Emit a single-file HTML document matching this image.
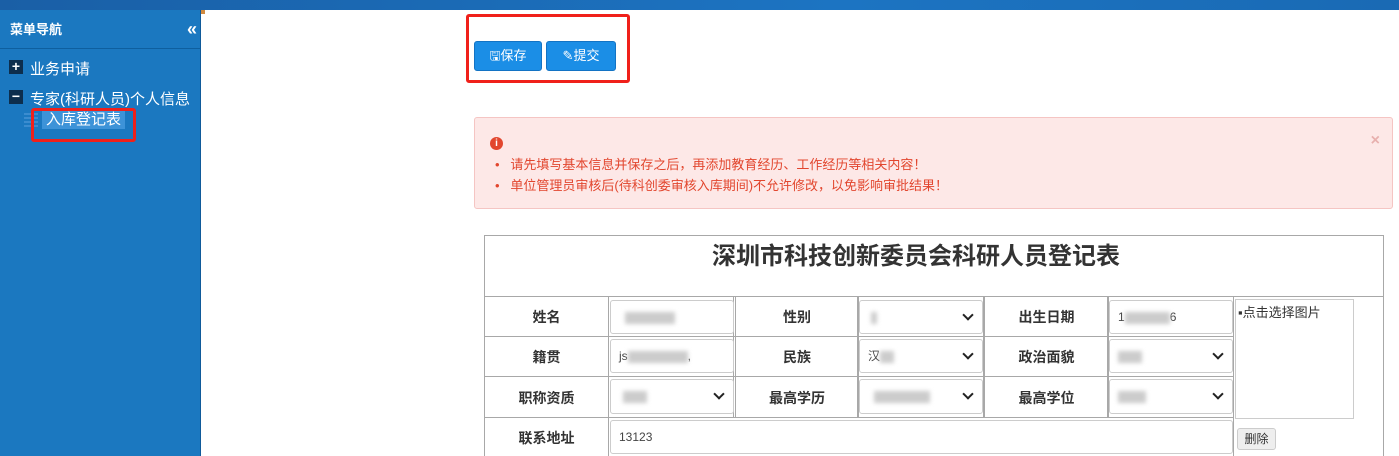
<!DOCTYPE html>
<html><head><meta charset="utf-8"><style>
*{box-sizing:border-box;margin:0;padding:0}
html,body{width:1399px;height:456px;overflow:hidden}
body{position:relative;background:#fff;font-family:"Liberation Sans","Noto Sans CJK SC",sans-serif;font-size:14px;color:#333}
.a{position:absolute}
.top{left:0;top:0;width:1399px;height:10px;background:linear-gradient(90deg,#1a5fa6,#1c74c2 60%,#1a6ab4)}
.side{left:0;top:10px;width:201px;height:446px;background:#1b78c0;border-right:1px solid #0f5a9a}
.hd{left:0;top:10px;width:200px;height:39px;border-bottom:1px solid #0e5f9f;color:#fff;font-size:13px;font-weight:bold;line-height:40px;padding-left:10px}
.nv{color:#fff;font-size:15px}
.box{width:14px;height:14px;background:#0d2e4d;color:#fff;font-size:14px;line-height:13px;text-align:center;font-weight:bold}
.red{border:3px solid #f0201a;border-radius:3px}
.btn{background:#1b8ee6;border:1px solid #1373c4;border-radius:3px;color:#fff;font-size:13px;line-height:28px;text-align:center;height:30px}
.alert{left:474px;top:117px;width:919px;height:92px;background:#fde8e7;border:1px solid #f5c5c3;border-radius:3px;color:#e2462e;font-size:13px}
.cell{border:1px solid #a8a8a8;text-align:center;font-weight:bold;font-size:14px;color:#333}
.in{border:1px solid #ccc;border-radius:3px;background:#fff;font-size:12px;color:#444;padding-left:8px;line-height:32px}
.blur{display:inline-block;background:#ccc;filter:blur(2px);height:12px;vertical-align:middle}
.chev{position:absolute;right:10px;top:10px;width:8px;height:8px;border-right:2px solid #222;border-bottom:2px solid #222;transform:rotate(45deg)}
</style></head><body>
<div class="a top"></div>
<div class="a side"></div>
<div class="a hd">菜单导航<span style="position:absolute;right:3px;top:-1px;font-size:18px">«</span></div>
<div class="a box" style="left:9px;top:60px">+</div><div class="a nv" style="left:30px;top:58px">业务申请</div>
<div class="a box" style="left:9px;top:90px">−</div><div class="a nv" style="left:30px;top:88px">专家(科研人员)个人信息</div>
<div class="a" style="left:24px;top:113px;width:14px;height:14px;background:repeating-linear-gradient(#3b8ccf 0 2px,#1b78c0 2px 4px)"></div>
<div class="a nv" style="left:42px;top:111px;background:#3d93d8;padding:0 4px;line-height:18px">入库登记表</div>
<div class="a red" style="left:31px;top:108px;width:105px;height:34px"></div>
<div class="a" style="left:201px;top:10px;width:4px;height:4px;background:#d08a40"></div>
<div class="a red" style="left:466px;top:14px;width:164px;height:69px"></div>
<div class="a btn" style="left:474px;top:41px;width:68px">🖫保存</div>
<div class="a btn" style="left:546px;top:41px;width:70px">✎提交</div>
<div class="a alert">
<div class="a" style="left:15px;top:19px;width:13px;height:13px;border-radius:50%;background:#e2462e;color:#fff;font-size:10px;font-weight:bold;text-align:center;line-height:13px">i</div>
<div class="a" style="left:20px;top:36px;line-height:21px">•&nbsp;&nbsp;&nbsp;请先填写基本信息并保存之后，再添加教育经历、工作经历等相关内容！<br>•&nbsp;&nbsp;&nbsp;单位管理员审核后(待科创委审核入库期间)不允许修改，以免影响审批结果！</div>
<div class="a" style="right:12px;top:14px;color:#e8b0ae;font-size:16px;font-weight:bold">×</div>
</div>
<div class="a" style="left:484px;top:235px;width:900px;height:221px;border:1px solid #a8a8a8;border-bottom:none"></div>
<div class="a" style="left:466px;top:236px;width:900px;text-align:center;font-size:24px;font-weight:bold;color:#333">深圳市科技创新委员会科研人员登记表</div>
<div class="a" style="left:484px;top:296px;width:900px;border-top:1px solid #a8a8a8"></div>
<div class="a cell" style="left:484px;top:296px;width:125px;height:41px;line-height:41px">姓名</div>
<div class="a cell" style="left:735px;top:296px;width:124px;height:41px;line-height:41px">性别</div>
<div class="a cell" style="left:984px;top:296px;width:125px;height:41px;line-height:41px">出生日期</div>
<div class="a cell" style="left:484px;top:336px;width:125px;height:41px;line-height:41px">籍贯</div>
<div class="a cell" style="left:735px;top:336px;width:124px;height:41px;line-height:41px">民族</div>
<div class="a cell" style="left:984px;top:336px;width:125px;height:41px;line-height:41px">政治面貌</div>
<div class="a cell" style="left:484px;top:376px;width:125px;height:42px;line-height:42px">职称资质</div>
<div class="a cell" style="left:735px;top:376px;width:124px;height:42px;line-height:42px">最高学历</div>
<div class="a cell" style="left:984px;top:376px;width:125px;height:42px;line-height:42px">最高学位</div>
<div class="a cell" style="left:484px;top:417px;width:125px;height:40px;line-height:40px;border-bottom:none">联系地址</div>
<div class="a" style="left:608px;top:296px;width:1px;height:160px;background:#a8a8a8"></div>
<div class="a" style="left:1233px;top:296px;width:1px;height:160px;background:#a8a8a8"></div>
<div class="a" style="left:608px;top:336px;width:626px;height:1px;background:#a8a8a8"></div>
<div class="a" style="left:608px;top:376px;width:626px;height:1px;background:#a8a8a8"></div>
<div class="a" style="left:484px;top:417px;width:900px;height:1px;background:#a8a8a8"></div>
<div class="a" style="left:1234px;top:417px;width:149px;height:1px;background:#fff"></div>
<div class="a" style="left:733px;top:296px;width:1px;height:121px;background:#a8a8a8"></div>
<div class="a" style="left:857px;top:296px;width:1px;height:121px;background:#a8a8a8"></div>
<div class="a" style="left:983px;top:296px;width:1px;height:121px;background:#a8a8a8"></div>
<div class="a" style="left:1107px;top:296px;width:1px;height:121px;background:#a8a8a8"></div>
<div class="a in" style="left:610px;top:300px;width:124px;height:34px"><span class="blur" style="width:50px;margin-left:6px"></span></div>
<div class="a in" style="left:859px;top:300px;width:124px;height:34px">&nbsp;<span class="blur" style="width:6px"></span><i class="chev"></i></div>
<div class="a in" style="left:1109px;top:300px;width:124px;height:34px">1<span class="blur" style="width:45px"></span>6</div>
<div class="a in" style="left:610px;top:339px;width:124px;height:34px">js<span class="blur" style="width:60px"></span>,</div>
<div class="a in" style="left:859px;top:339px;width:124px;height:34px">汉<span class="blur" style="width:14px"></span><i class="chev"></i></div>
<div class="a in" style="left:1109px;top:339px;width:124px;height:34px"><span class="blur" style="width:24px"></span><i class="chev"></i></div>
<div class="a in" style="left:610px;top:379px;width:124px;height:35px"><span class="blur" style="width:24px;margin-left:4px"></span><i class="chev"></i></div>
<div class="a in" style="left:859px;top:379px;width:124px;height:35px"><span class="blur" style="width:56px;margin-left:6px"></span><i class="chev"></i></div>
<div class="a in" style="left:1109px;top:379px;width:124px;height:35px"><span class="blur" style="width:28px"></span><i class="chev"></i></div>
<div class="a in" style="left:610px;top:420px;width:623px;height:34px">13123</div>
<div class="a" style="left:1235px;top:299px;width:119px;height:120px;border:1px solid #ccc;font-size:13px;color:#333;padding:2px 0 0 2px">▪点击选择图片</div>
<div class="a" style="left:1237px;top:428px;width:39px;height:22px;border:1px solid #ccc;border-radius:3px;background:#eee;font-size:12px;text-align:center;line-height:20px">删除</div>
</body></html>
